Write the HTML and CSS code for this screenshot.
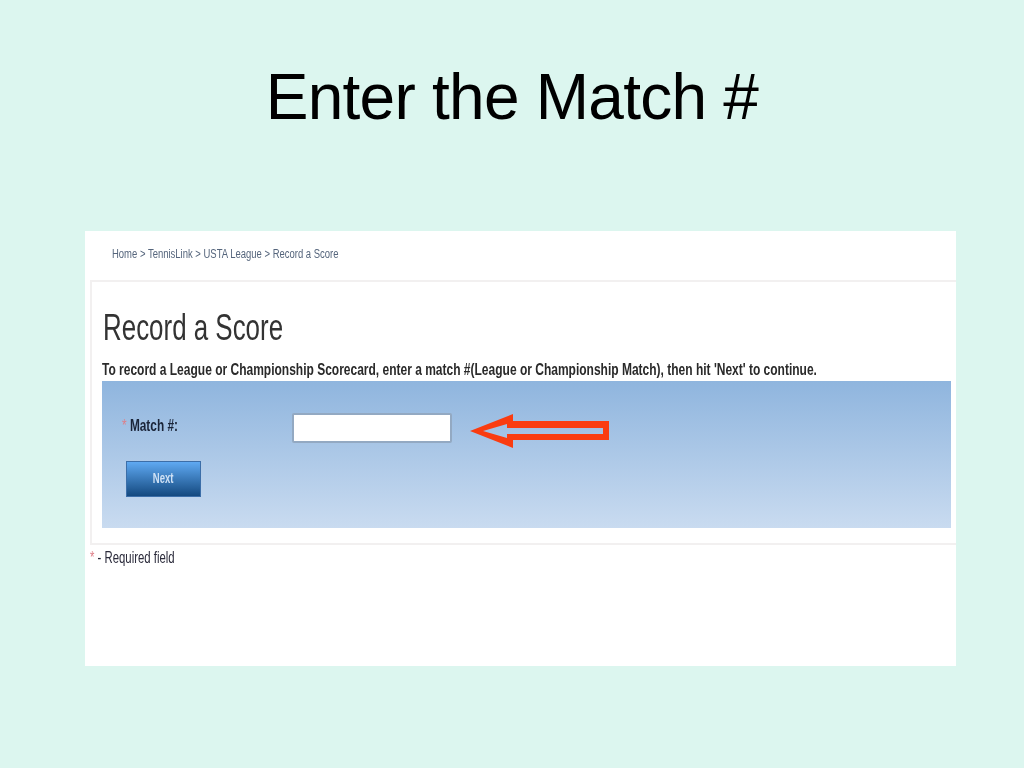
FILE: index.html
```html
<!DOCTYPE html>
<html lang="en">
<head>
    <meta charset="UTF-8">
    <meta name="viewport" content="width=device-width, initial-scale=1.0">
    <title>Enter the Match #</title>
    <link rel="stylesheet" href="styles.css">
</head>
<body>
    <h1 class="slide-title">Enter the Match #</h1>

    <div class="shot">
        <div class="breadcrumb"><span class="squeeze">Home &gt; TennisLink &gt; USTA League &gt; Record a Score</span></div>

        <div class="panel">
            <h2 class="panel-title"><span class="squeeze">Record a Score</span></h2>
            <p class="intro"><span class="squeeze">To record a League or Championship Scorecard, enter a match #(League or Championship Match), then hit 'Next' to continue.</span></p>

            <div class="form-box">
                <div class="form-row">
                    <label class="form-label"><span class="squeeze"><span class="star">*</span> Match #:</span></label>
                    <input class="match-input" type="text">
                    <!-- Red callout arrow -->
                    <svg class="arrow" width="143" height="36" viewBox="0 0 143 36">
                        <path d="M2 18 L45 1 L45 8 L141 8 L141 27 L45 27 L45 35 Z M15 18 L39 25 L39 21 L135 21 L135 15 L39 15 L39 11 Z" fill="#fa3c10" fill-rule="evenodd"/>
                    </svg>
                </div>
                <button class="next-btn" type="button"><span class="squeeze">Next</span></button>
            </div>
        </div>

        <p class="required"><span class="squeeze"><span class="star">*</span> - Required field</span></p>
    </div>
</body>
</html>
```

FILE: styles.css
```css
body {
    font-family: "Liberation Sans", Arial, sans-serif;
    background-color: #dcf6ef;
    margin: 0;
    padding: 0;
}

.slide-title {
    margin: 0;
    height: 231px;
    padding-top: 60px;
    box-sizing: border-box;
    text-align: center;
    font-size: 64px;
    line-height: 74px;
    letter-spacing: -0.75px;
    font-weight: normal;
    color: #000;
}

.shot {
    width: 871px;
    height: 435px;
    margin-left: 85px;
    background: #fff;
    overflow: hidden;
}

.squeeze {
    display: inline-block;
    white-space: nowrap;
    transform-origin: left center;
    filter: blur(0.35px);
}

.breadcrumb {
    height: 49px;
    padding: 15px 0 0 27px;
    box-sizing: border-box;
    font-size: 12px;
    line-height: 16px;
    color: #55657c;
}

.breadcrumb .squeeze {
    transform: scaleX(0.79);
}

.panel {
    height: 265px;
    margin-left: 5px;
    padding: 0 5px 0 10px;
    box-sizing: border-box;
    border: 2px solid #f2f0f0;
    border-right: none;
}

.panel-title {
    margin: 0 0 0 1px;
    padding-top: 25px;
    font-size: 36px;
    line-height: 42px;
    font-weight: normal;
    color: #333;
}

.panel-title .squeeze {
    transform: scaleX(0.72);
}

.intro {
    margin: 11px 0 0;
    font-size: 16px;
    line-height: 20px;
    font-weight: bold;
    color: #2a2a2a;
}

.intro .squeeze {
    transform: scaleX(0.75);
}

.form-box {
    height: 147px;
    margin-top: 1px;
    padding: 32px 0 0 24px;
    box-sizing: border-box;
    background: linear-gradient(#8fb5de, #c9dbf0);
}

.form-row {
    display: flex;
    align-items: center;
    height: 30px;
}

.form-label {
    width: 170px;
    margin: -4px 0 0 -4px;
    font-size: 16px;
    font-weight: bold;
    color: #1a2438;
}

.form-label .squeeze {
    transform: scaleX(0.74);
}

.star {
    color: #de7f88;
    font-weight: normal;
}

.match-input {
    width: 160px;
    height: 30px;
    box-sizing: border-box;
    background: #fff;
    border: 2px solid #93a9c2;
    border-radius: 2px;
    padding: 0;
}

.arrow {
    margin: 6px 0 0 16px;
}

.next-btn {
    display: block;
    width: 75px;
    height: 36px;
    margin-top: 18px;
    padding: 0 0 2px;
    border: 1px solid #3c6ea8;
    background: linear-gradient(#5fa9f2, #14497f);
    color: #cfe1f5;
    font-family: inherit;
    font-size: 14px;
    font-weight: bold;
}

.next-btn .squeeze {
    transform: scaleX(0.68);
    transform-origin: center;
}

.required {
    margin: 3px 0 0 5px;
    font-size: 16px;
    line-height: 20px;
    color: #2a2a3a;
}

.required .squeeze {
    transform: scaleX(0.71);
}
```
